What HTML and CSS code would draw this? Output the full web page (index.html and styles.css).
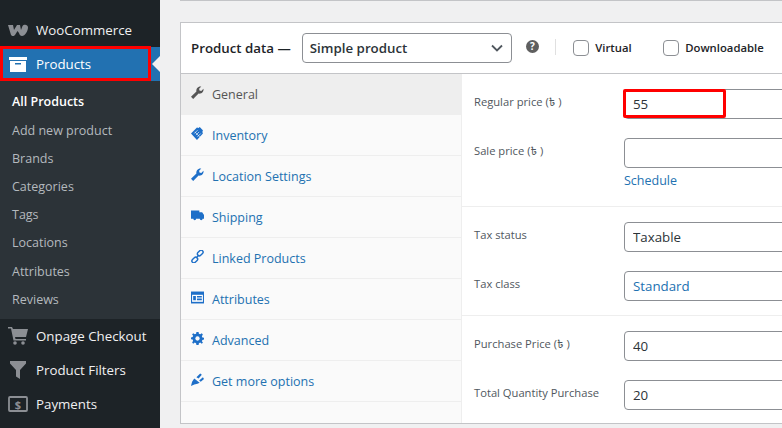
FILE: index.html
```html
<!DOCTYPE html>
<html lang="en">
<head>
<meta charset="utf-8">
<title>Edit product</title>
<link rel="stylesheet" href="styles.css">
</head>
<body>
<div class="page">
  <nav class="sidebar">
    <a class="menu-row woo">
      <svg class="ico" viewBox="0 0 20 12"><path fill="#8c8f94" d="M0 1h5l1 5 3-5h3l1 5 1.500-4C15.500 0 20 0 20 3.500 20 7 17 12 14 12c-1.500 0-2.500-1-3-3L9.500 7 7 11c-1 1.500-3 1.500-4 0z"/></svg>
      <span>WooCommerce</span>
    </a>
    <a class="menu-row current">
      <svg class="ico" viewBox="0 0 20 18"><path fill="#fff" d="M1 2h18v3H1zM2 6h16v11H2z"/><path fill="#2271b1" d="M7 8h6v1.500H7z"/></svg>
      <span>Products</span>
    </a>
    <ul class="submenu">
      <li class="active">All Products</li>
      <li>Add new product</li>
      <li>Brands</li>
      <li>Categories</li>
      <li>Tags</li>
      <li>Locations</li>
      <li>Attributes</li>
      <li>Reviews</li>
    </ul>
    <a class="menu-row">
      <svg class="ico" viewBox="0 0 20 18"><path fill="#8c8f94" d="M0 0h4l1 2h15l-2 8H7l.5 2H18v1.500H5.500L3 1.500H0z"/><circle fill="#8c8f94" cx="7" cy="16" r="1.800"/><circle fill="#8c8f94" cx="15" cy="16" r="1.800"/></svg>
      <span>Onpage Checkout</span>
    </a>
    <a class="menu-row">
      <svg class="ico" viewBox="0 0 20 18"><path fill="#8c8f94" d="M2 0h16v2.500L12 9v9l-4-2.500V9L2 2.500z"/></svg>
      <span>Product Filters</span>
    </a>
    <a class="menu-row">
      <svg class="ico" viewBox="0 0 20 18"><rect x="1" y="2" width="18" height="14" rx="1" fill="none" stroke="#8c8f94" stroke-width="1.800"/><text x="10" y="13.500" text-anchor="middle" class="dollar">$</text></svg>
      <span>Payments</span>
    </a>
  </nav>

  <main class="content">
    <section class="panel">
      <header class="panel-head">
        <h2 class="panel-title">Product data —</h2>
        <div class="type-select">
          <span>Simple product</span>
          <svg class="chev" viewBox="0 0 12 8"><path d="M1 1.500l5 5 5-5" fill="none" stroke="#50575e" stroke-width="1.800"/></svg>
        </div>
        <span class="help">?</span>
        <span class="vsep"></span>
        <label class="check"><span class="box"></span>Virtual</label>
        <label class="check dl"><span class="box"></span>Downloadable</label>
      </header>
      <div class="panel-body">
        <ul class="tabs">
          <li class="tab on">
            <svg class="tab-ico" viewBox="0 0 12 12"><path fill="currentColor" d="M0 10l5-5C4.500 2.500 6.500 0 9.500.5L7.500 2.500l.3 1.700 1.700.3 2-2c.5 3-2 5-4.500 4.500l-5 5z"/></svg>
            General
          </li>
          <li class="tab">
            <svg class="tab-ico" viewBox="0 0 12 12"><path fill="currentColor" d="M0 6l5.500-5.500 1.500.5 1-1 1 1 1 1 1 1-.5 1.500.5 1.500L5.500 12z"/><path stroke="#fff" stroke-width=".6" d="M3 6l3-3M4.500 7.500l3-3M6 9l3-3M3.500 4.500l4.500 4.500"/></svg>
            Inventory
          </li>
          <li class="tab">
            <svg class="tab-ico" viewBox="0 0 12 12"><path fill="currentColor" d="M0 10l5-5C4.500 2.500 6.500 0 9.500.5L7.500 2.500l.3 1.700 1.700.3 2-2c.5 3-2 5-4.500 4.500l-5 5z"/></svg>
            Location Settings
          </li>
          <li class="tab">
            <svg class="tab-ico" viewBox="0 0 14 11"><path fill="currentColor" d="M0 0h9v2h3l2 3v4h-1.500a1.500 1.500 0 0 1-3 0h-4a1.500 1.500 0 0 1-3 0H0z"/></svg>
            Shipping
          </li>
          <li class="tab">
            <svg class="tab-ico" viewBox="0 0 12 12"><g fill="none" stroke="currentColor" stroke-width="1.300"><rect x="5.500" y="1" width="6" height="3.600" rx="1.800" transform="rotate(-45 8.500 2.800)"/><rect x=".5" y="7.400" width="6" height="3.600" rx="1.800" transform="rotate(-45 3.500 9.200)"/><path d="M4.500 7.500l3-3"/></g></svg>
            Linked Products
          </li>
          <li class="tab">
            <svg class="tab-ico" viewBox="0 0 12 11"><path fill="currentColor" d="M0 0h12v11H0z"/><path fill="#fff" d="M1 3h10v6.500H1z"/><path fill="currentColor" d="M2 4h2.500v4H2zM5.500 4H10v1.500H5.500zM5.500 6.500H10V8H5.500z"/></svg>
            Attributes
          </li>
          <li class="tab">
            <svg class="tab-ico" viewBox="0 0 12 12"><path fill="currentColor" d="M5 0h2l.3 1.600 1.200.5L10 1.200 11 2.500l-1 1.300.5 1.200 1.500.3v1.700l-1.500.3-.5 1.200 1 1.300L10 10.800l-1.500-1-1.200.5L7 12H5l-.3-1.700-1.200-.5-1.500 1L1 9.500l1-1.300-.5-1.200L0 6.700V5l1.500-.3.500-1.200-1-1.300L2 1.200l1.500.9 1.200-.5z"/><circle cx="6" cy="6" r="2" fill="#fafafa"/></svg>
            Advanced
          </li>
          <li class="tab">
            <svg class="tab-ico" viewBox="0 0 12 12"><path fill="currentColor" d="M0 12l1-4 2-3 5 4-2 1-3 .5zM5 4L8.500 0.500l1.500 1L7 5zM7.500 7L11 4l1 1.500L9 8z"/></svg>
            Get more options
          </li>
          <li class="tab-fill"></li>
        </ul>
        <div class="fields">
          <div class="group g1">
            <div class="field"><label>Regular price (৳ )</label><div class="marked"><input class="inp" value="55"></div></div>
            <div class="field"><label>Sale price (৳ )</label><div class="stack"><input class="inp" value=""><a class="schedule">Schedule</a></div></div>
          </div>
          <div class="group g2">
            <div class="field"><label>Tax status</label><input class="inp" value="Taxable"></div>
            <div class="field"><label>Tax class</label><input class="inp blue" value="Standard"></div>
          </div>
          <div class="group g3">
            <div class="field"><label>Purchase Price (৳ )</label><input class="inp" value="40"></div>
            <div class="field"><label>Total Quantity Purchase</label><input class="inp" value="20"></div>
          </div>
        </div>
      </div>
    </section>
  </main>
</div>
</body>
</html>
```

FILE: styles.css
```css
*, *::before, *::after { box-sizing: border-box; }
html, body { margin: 0; padding: 0; height: 100%; overflow: hidden; }
body { background: #f0f0f1; font-family: "Open Sans", "Noto Sans", "Noto Sans Bengali", sans-serif; font-size: 12.5px; color: #3c434a; }
.page { display: flex; width: 782px; height: 428px; overflow: hidden; }

.sidebar { flex: 0 0 160px; background: #1d2327; padding-top: 13px; color: #f0f0f1; }
.menu-row { display: flex; align-items: center; height: 34px; padding-left: 8px; font-size: 13.300px; color: #f0f0f1; }
.menu-row .ico { flex: 0 0 20px; width: 20px; height: 18px; margin-right: 8px; }
.woo .ico { height: 12px; }
.menu-row.current { position: relative; background: #2271b1; color: #fff; }
.menu-row.current::before { content: ""; position: absolute; left: 0; top: -1px; width: 151px; height: 35px; border: 3px solid #f00; }
.menu-row.current::after { content: ""; position: absolute; right: 0; top: 9px; border: 8px solid transparent; border-right-color: #f0f0f1; border-left: 0; }
.dollar { font: 700 11px "Open Sans", sans-serif; fill: #8c8f94; }

.submenu { list-style: none; margin: 0; padding: 7.400px 0 5px 12px; background: #2c3338; font-size: 12.5px; color: #b4b9be; }
.submenu li { height: 28.200px; line-height: 28px; }
.submenu .active { color: #fff; font-weight: 600; }

.content { flex: 1 1 auto; min-width: 0; padding: 22px 0 0 20px; position: relative; }
.content::before { content: ""; display: block; position: absolute; top: 0; left: 20px; right: 0; height: 1px; background: #c3c4c7; }
.panel { width: 640px; height: 402px; background: #fff; border: 1px solid #c3c4c7; }
.panel-head { display: flex; align-items: center; height: 51px; border-bottom: 1px solid #c3c4c7; padding-left: 10px; }
.panel-title { flex: none; margin: 0 11px 0 0; font-size: 13.300px; font-weight: 600; color: #1d2327; white-space: nowrap; }
.type-select { flex: none; display: flex; align-items: center; justify-content: space-between; width: 210px; height: 30px; border: 1px solid #8c8f94; border-radius: 4px; padding: 0 8px 0 7px; font-size: 13.300px; font-weight: 600; color: #2c3338; }
.chev { width: 12px; height: 8px; }
.help { flex: none; display: flex; align-items: center; justify-content: center; width: 13px; height: 13px; margin: -4px 0 0 14px; border-radius: 50%; background: #5f5f5f; color: #fff; font-size: 10px; font-weight: 700; }
.vsep { flex: none; width: 1px; height: 16px; margin: -2px 0 0 16px; background: #e0e0e0; }
.check { flex: none; display: flex; align-items: center; font-size: 11.300px; font-weight: 600; color: #1d2327; margin-left: 17px; white-space: nowrap; }
.check.dl { margin-left: 31px; }
.box { width: 16px; height: 16px; margin-right: 6.500px; border: 1px solid #8c8f94; border-radius: 4px; background: #fff; }

.panel-body { display: flex; height: 349px; }
.tabs { flex: 0 0 281px; list-style: none; margin: 0; padding: 0; background: #fafafa; border-right: 1px solid #eee; display: flex; flex-direction: column; }
.tab { display: flex; align-items: center; height: 41px; padding: 0 0 0 10px; border-bottom: 1px solid #eee; color: #2271b1; font-size: 12.500px; }
.tab.on { background: #eee; color: #555; border-bottom: 0; }
.tab-ico { width: 13px; height: 13px; margin: -4px 8px 0 0; flex: none; color: #1e6fc8; }
.tab.on .tab-ico { color: #555; }
.tab-fill { flex: 1; }

.fields { flex: 1; min-width: 0; }
.group { border-bottom: 1px solid #eee; padding: 0 0 0 12px; }
.group:last-child { border-bottom: 0; }
.g1 { height: 133px; padding-top: 15px; }
.g2 { height: 109px; padding-top: 15px; }
.g3 { padding-top: 15px; }
.field { display: flex; align-items: flex-start; margin-bottom: 19px; }
label { font-size: 11.200px; line-height: 16px; flex: 0 0 150px; color: #50575e; white-space: nowrap; }
.field > label { padding-top: 5px; }
.inp { display: block; width: 180px; height: 30px; padding: 0 8px; border: 1px solid #8c8f94; border-radius: 4px; background: #fff; font: 13.300px "Open Sans", sans-serif; color: #2c3338; outline: none; }
.inp.blue { color: #2271b1; }
.marked { position: relative; }
.marked::after { content: ""; position: absolute; left: -1px; top: 0; width: 103px; height: 29px; border: 3px solid #f00; border-radius: 2px; }
.schedule { display: block; margin-top: 4px; color: #2271b1; font-size: 12.500px; line-height: 17px; }
.stack { display: flex; flex-direction: column; }
```
